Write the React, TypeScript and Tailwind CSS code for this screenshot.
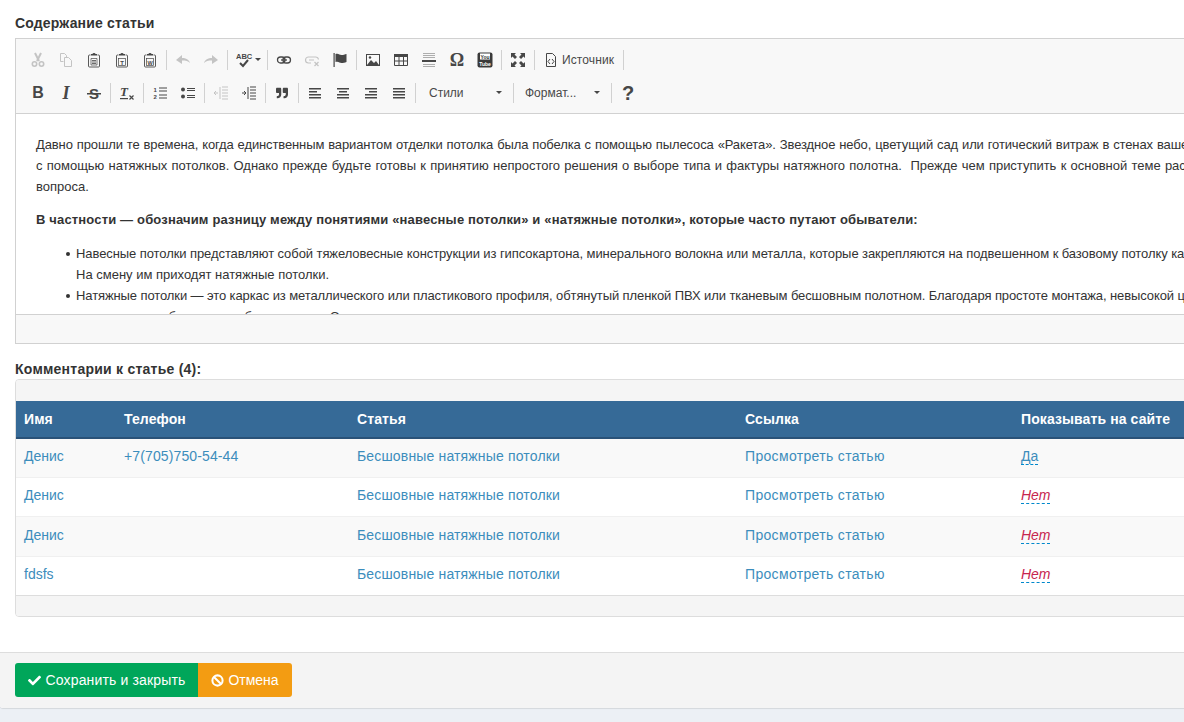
import { FaCheck, FaQuoteRight } from "react-icons/fa"

const Svg = ({ children, className = "" }: { children: React.ReactNode; className?: string }) => (
  <svg viewBox="0 0 16 16" width="16" height="16" className={className}>
    {children}
  </svg>
)

const Btn = ({ children, off }: { children: React.ReactNode; off?: boolean }) => (
  <div className={`w-[28px] h-[24px] flex items-center justify-center ${off ? "text-[#c4c4c4]" : "text-[#474747]"}`}>{children}</div>
)

const Sep = () => (
  <div className="w-[5px] h-[24px] flex justify-start pl-[2px]">
    <div className="w-px h-[20px] mt-[2px] bg-[#d1d1d1]" />
  </div>
)

const Clip = ({ children }: { children?: React.ReactNode }) => (
  <Svg>
    <path d="M4.500 3H3.500a1 1 0 00-1 1v10a1 1 0 001 1h9a1 1 0 001-1V4a1 1 0 00-1-1h-1" fill="none" stroke="currentColor" strokeWidth="0.900" />
    <path d="M5 3.500V2h1.500a1.500 1 0 013 0H11v1.500z" fill="currentColor" />
    {children}
  </Svg>
)

const Lines = ({ rows }: { rows: [number, number, number][] }) => (
  <Svg>
    {rows.map(([x, y, w], i) => (
      <rect key={i} x={x} y={y} width={w} height="1.500" fill="currentColor" />
    ))}
  </Svg>
)

const Combo = ({ label, pad }: { label: string; pad: string }) => (
  <div className={`w-[93px] h-[24px] flex items-center justify-between pr-[8px] text-[12px] text-[#484848] ${pad}`}>
    <span>{label}</span>
    <span className="w-0 h-0 border-x-[3px] border-x-transparent border-t-[3px] border-t-[#474747] mr-[1px]" />
  </div>
)

const Row = ({ children }: { children: React.ReactNode }) => <div className="h-[33px] flex items-center pl-[8px]">{children}</div>

const bullet = "relative whitespace-nowrap before:content-[''] before:absolute before:left-[-10px] before:top-[9px] before:w-[4px] before:h-[4px] before:rounded-full before:bg-[#333]"

const comments = [
  { name: "Денис", phone: "+7(705)750-54-44", show: true, h: "h-[39px]" },
  { name: "Денис", phone: "", show: false, h: "h-[39px]" },
  { name: "Денис", phone: "", show: false, h: "h-[40px]" },
  { name: "fdsfs", phone: "", show: false, h: "h-[39px]" },
]

export default function App() {
  return (
    <div className="w-[1184px] h-[722px] overflow-hidden bg-[#ecf0f5] font-['Liberation_Sans',Arial,sans-serif] text-[#333]">
      <div className="w-[1320px] h-[708px] bg-white rounded-b-[3px] shadow-[0_1px_1px_rgba(0,0,0,0.1)]">
        <div className="px-[15px] pt-[13px]">
          <label className="block h-[20px] leading-[20px] mb-[5px] text-[14px] font-bold tracking-[0.17px]">Содержание статьи</label>

          {/* editor */}
          <div className="border border-[#d1d1d1] h-[306px] flex flex-col">
            <div className="h-[75px] bg-[#f8f8f8] border-b border-[#d1d1d1] py-[4px]">
              <Row>
                <Btn off>
                  <Svg>
                    <path d="M5 1l4 8M11 1L7 9" stroke="currentColor" strokeWidth="2" fill="none" />
                    <circle cx="4.500" cy="12" r="2.200" stroke="currentColor" strokeWidth="1.600" fill="none" />
                    <circle cx="11.500" cy="12" r="2.200" stroke="currentColor" strokeWidth="1.600" fill="none" />
                  </Svg>
                </Btn>
                <Btn off>
                  <Svg>
                    <path d="M2.500 1.500h4l2 2v2M2.500 1.500v8h3M6.500 5.500h4l3 3v6h-7z" fill="none" stroke="currentColor" />
                  </Svg>
                </Btn>
                <Btn>
                  <Clip>
                    <path d="M5 6.500h6v6.500H5z" fill="none" stroke="currentColor" strokeWidth="0.700" />
                    <path d="M6 8.500h4M6 10h4M6 11.500h4" stroke="currentColor" strokeWidth="0.800" />
                  </Clip>
                </Btn>
                <Btn>
                  <Clip>
                    <rect x="4.500" y="6.500" width="7" height="7" fill="none" stroke="currentColor" strokeWidth="0.700" />
                    <text x="8" y="12.800" fontSize="6" fontWeight="700" textAnchor="middle" fill="currentColor">T</text>
                  </Clip>
                </Btn>
                <Btn>
                  <Clip>
                    <rect x="4.500" y="6.500" width="7" height="7" fill="none" stroke="currentColor" strokeWidth="0.700" />
                    <text x="8" y="12.500" fontSize="5.500" fontWeight="700" textAnchor="middle" fill="currentColor">W</text>
                  </Clip>
                </Btn>
                <Sep />
                <Btn off>
                  <Svg>
                    <path d="M1 8l6-5v3c4 0 7 1.500 8 5-2-2-4-2.500-8-2.500V12z" fill="currentColor" />
                  </Svg>
                </Btn>
                <Btn off>
                  <Svg>
                    <path d="M15 8L9 3v3c-4 0-7 1.500-8 5 2-2 4-2.500 8-2.500V12z" fill="currentColor" />
                  </Svg>
                </Btn>
                <Sep />
                <div className="w-[35px] h-[24px] flex items-center pl-[6px] text-[#474747]">
                  <svg viewBox="0 0 18 18" width="18" height="18">
                    <text x="0" y="8" fontSize="7.500" fontWeight="700" fill="currentColor">ABC</text>
                    <path d="M4 12l3 3 5-6" fill="none" stroke="currentColor" strokeWidth="2" />
                  </svg>
                  <span className="ml-[1px] w-0 h-0 border-x-[3px] border-x-transparent border-t-[3px] border-t-[#474747]" />
                </div>
                <Sep />
                <Btn>
                  <Svg>
                    <rect x="1.500" y="5" width="7.500" height="6" rx="3" fill="none" stroke="currentColor" strokeWidth="1.300" />
                    <rect x="7" y="5" width="7.500" height="6" rx="3" fill="none" stroke="currentColor" strokeWidth="1.300" />
                    <path d="M5 8h6" stroke="currentColor" strokeWidth="1.300" />
                  </Svg>
                </Btn>
                <Btn off>
                  <Svg>
                    <path d="M8 5H4.500a3 3 0 000 6H7M8 5h3.500a3 3 0 013 2.500M5 8h5" fill="none" stroke="currentColor" strokeWidth="1.200" />
                    <path d="M10.500 10l4 4M14.500 10l-4 4" stroke="currentColor" strokeWidth="1.200" />
                  </Svg>
                </Btn>
                <Btn>
                  <Svg>
                    <rect x="1.500" y="1" width="1.200" height="14" fill="currentColor" />
                    <path d="M3.500 2c3-1 4 1 6 1 2 0 3-.5 5-1v8c-2 .7-3 1-5 1s-3-2-6-1z" fill="currentColor" />
                  </Svg>
                </Btn>
                <Sep />
                <Btn>
                  <Svg>
                    <rect x="1.500" y="2.500" width="13" height="11" fill="none" stroke="currentColor" />
                    <path d="M2 13l4-5 3 3 2-2 3 4z" fill="currentColor" />
                    <circle cx="5" cy="5.500" r="1.200" fill="currentColor" />
                  </Svg>
                </Btn>
                <Btn>
                  <Svg>
                    <rect x="1" y="2" width="14" height="3" fill="currentColor" />
                    <path d="M1.500 2.500h13v11h-13zM1.500 9h13M6 5v8M10.500 5v8" fill="none" stroke="currentColor" />
                  </Svg>
                </Btn>
                <Btn>
                  <Svg>
                    <path d="M2 1.500h12M2 3.500h12M2 5.500h12M2 12.500h12M2 14.500h12" stroke="#9a9a9a" strokeWidth="0.800" />
                    <rect x="1" y="8" width="14" height="2" fill="currentColor" />
                  </Svg>
                </Btn>
                <Btn>
                  <span className="font-['Liberation_Serif',serif] text-[18px] font-bold leading-none">Ω</span>
                </Btn>
                <Btn>
                  <Svg>
                    <rect x="0.500" y="0.500" width="15" height="15" rx="2" fill="#3a3a3a" />
                    <rect x="3" y="1.500" width="10" height="6" fill="#fff" />
                    <text x="8" y="6.500" fontSize="5" fontWeight="700" textAnchor="middle" fill="#333">You</text>
                    <text x="8" y="13.500" fontSize="5" fontWeight="700" textAnchor="middle" fill="#fff">Tube</text>
                  </Svg>
                </Btn>
                <Sep />
                <Btn>
                  <Svg>
                    <path d="M1 1h5L4.500 2.500 7 5 5 7 2.500 4.500 1 6zM15 1v5l-1.500-1.500L11 7 9 5l2.500-2.500L10 1zM1 15v-5l1.500 1.500L5 9l2 2-2.500 2.500L6 15zM15 15h-5l1.500-1.500L9 11l2-2 2.500 2.500L15 10z" fill="currentColor" />
                  </Svg>
                </Btn>
                <Sep />
                <div className="w-[84px] h-[24px] flex items-center pl-[6px] text-[12px] tracking-[0.1px] text-[#484848]">
                  <Svg className="shrink-0">
                    <path d="M3.500 1.500h6l3 3v10h-9z" fill="none" stroke="#474747" />
                    <path d="M7 7L5 9.500 7 12M9 7l2 2.500L9 12" fill="none" stroke="#474747" />
                  </Svg>
                  <span className="ml-[3px]">Источник</span>
                </div>
                <Sep />
              </Row>
              <Row>
                <Btn>
                  <span className="text-[16px] font-bold leading-none">B</span>
                </Btn>
                <Btn>
                  <span className="font-['Liberation_Serif',serif] text-[18px] font-bold italic leading-none">I</span>
                </Btn>
                <Btn>
                  <Svg>
                    <text x="8" y="14" fontSize="15" fontWeight="700" textAnchor="middle" fill="currentColor">S</text>
                    <rect x="1" y="8" width="14" height="1.500" fill="currentColor" />
                  </Svg>
                </Btn>
                <Sep />
                <Btn>
                  <Svg>
                    <text x="1" y="11" fontSize="13" fontWeight="700" fontStyle="italic" fontFamily="Liberation Serif" fill="currentColor">T</text>
                    <rect x="1" y="13" width="8" height="1.200" fill="currentColor" />
                    <path d="M10.500 10.500l4 4M14.500 10.500l-4 4" stroke="currentColor" strokeWidth="1.200" />
                  </Svg>
                </Btn>
                <Sep />
                <Btn>
                  <Svg>
                    <path d="M7 3h8M7 6h8M7 10h8M7 13h8" stroke="currentColor" strokeWidth="1" />
                    <text x="1.500" y="6.500" fontSize="6" fontWeight="700" fill="currentColor">1</text>
                    <text x="1.500" y="14" fontSize="6" fontWeight="700" fill="currentColor">2</text>
                  </Svg>
                </Btn>
                <Btn>
                  <Svg>
                    <circle cx="3" cy="4.500" r="2" fill="currentColor" />
                    <circle cx="3" cy="11.500" r="2" fill="currentColor" />
                    <path d="M7 3.500h8M7 5.500h8M7 10.500h8M7 12.500h8" stroke="currentColor" strokeWidth="1" />
                  </Svg>
                </Btn>
                <Sep />
                <Btn off>
                  <Svg>
                    <path d="M9 2h6M9 5h6M9 8h6M9 11h6M9 14h6M7 2v12" stroke="currentColor" />
                    <path d="M5 8H1M3 6L1 8l2 2" fill="none" stroke="currentColor" />
                  </Svg>
                </Btn>
                <Btn>
                  <Svg>
                    <path d="M9 2h6M9 5h6M9 8h6M9 11h6M9 14h6M7 2v12" stroke="currentColor" />
                    <path d="M1 8h4M3 6l2 2-2 2" fill="none" stroke="currentColor" />
                  </Svg>
                </Btn>
                <Sep />
                <Btn>
                  <FaQuoteRight size={12} />
                </Btn>
                <Sep />
                <Btn>
                  <Lines rows={[[2, 3, 12], [2, 6, 8], [2, 9, 12], [2, 12, 12]]} />
                </Btn>
                <Btn>
                  <Lines rows={[[2, 3, 12], [4, 6, 8], [2, 9, 12], [2, 12, 12]]} />
                </Btn>
                <Btn>
                  <Lines rows={[[2, 3, 12], [6, 6, 8], [2, 9, 12], [2, 12, 12]]} />
                </Btn>
                <Btn>
                  <Lines rows={[[2, 3, 12], [2, 6, 12], [2, 9, 12], [2, 12, 12]]} />
                </Btn>
                <Sep />
                <Combo label="Стили" pad="pl-[11px]" />
                <Sep />
                <Combo label="Формат..." pad="pl-[9px]" />
                <Sep />
                <Btn>
                  <span className="text-[20px] font-bold leading-none">?</span>
                </Btn>
              </Row>
            </div>

            <div className="h-[200px] overflow-hidden bg-white pl-[20px] pt-[20px] text-[13px] leading-[21px]">
              <div className="h-[21px] whitespace-nowrap tracking-[-0.12px] [word-spacing:0.5px]">
                Давно прошли те времена, когда единственным вариантом отделки потолка была побелка с помощью пылесоса «Ракета». Звездное небо, цветущий сад или готический витраж в стенах вашего дома
              </div>
              <div className="h-[21px] whitespace-nowrap tracking-[-0.02px] [word-spacing:0.7px]">
                с помощью натяжных потолков. Однако прежде будьте готовы к принятию непростого решения о выборе типа и фактуры натяжного полотна. &nbsp;Прежде чем приступить к основной теме рассмотрения
              </div>
              <div className="h-[21px]">вопроса.</div>
              <p className="mt-[12px] h-[21px] font-bold whitespace-nowrap tracking-[0.16px]">
                В частности — обозначим разницу между понятиями «навесные потолки» и «натяжные потолки», которые часто путают обыватели:
              </p>
              <ul className="mt-[13px] ml-[40px] w-[1270px]">
                <li className={`${bullet} tracking-[-0.08px]`}>
                  Навесные потолки представляют собой тяжеловесные конструкции из гипсокартона, минерального волокна или металла, которые закрепляются на подвешенном к базовому потолку каркасе.
                </li>
                <li className="whitespace-nowrap">На смену им приходят натяжные потолки.</li>
                <li className={`${bullet} tracking-[-0.1px]`}>
                  Натяжные потолки — это каркас из металлического или пластикового профиля, обтянутый пленкой ПВХ или тканевым бесшовным полотном. Благодаря простоте монтажа, невысокой цене
                </li>
                <li className="whitespace-nowrap">материал стал быстро и в обиход вошел. Однако</li>
              </ul>
            </div>

            <div className="flex-1 bg-[#f8f8f8] border-t border-[#d1d1d1]" />
          </div>

          <label className="block mt-[15px] h-[20px] leading-[20px] text-[14px] font-bold tracking-[0.24px]">Комментарии к статье (4):</label>

          {/* comments grid */}
          <div className="border border-[#ddd] rounded-[4px] overflow-hidden h-[238px] flex flex-col">
            <div className="h-[21px] bg-[#f5f5f5]" />
            <table className="table-fixed w-full text-[14px] border-collapse">
              <colgroup>
                <col className="w-[100px]" />
                <col className="w-[233px]" />
                <col className="w-[388px]" />
                <col className="w-[276px]" />
                <col />
              </colgroup>
              <thead>
                <tr className="h-[37px] bg-[#366a97] text-white border-b-2 border-[#2a5278]">
                  {["Имя", "Телефон", "Статья", "Ссылка", "Показывать на сайте"].map((t) => (
                    <th key={t} className="px-[8px] text-left font-bold tracking-[0.1px]">{t}</th>
                  ))}
                </tr>
              </thead>
              <tbody>
                {comments.map((c, i) => (
                  <tr key={i} className={`${c.h} border-t border-[#f0f0f0] text-[#3c8dbc] ${i % 2 === 0 ? "bg-[#f9f9f9]" : "bg-white"}`}>
                    <td className="px-[8px] pb-[2px]">{c.name}</td>
                    <td className="px-[8px] pb-[2px] tracking-[0.12px]">{c.phone}</td>
                    <td className="px-[8px] pb-[2px] tracking-[0.16px]">Бесшовные натяжные потолки</td>
                    <td className="px-[8px] pb-[2px] tracking-[0.33px]">Просмотреть статью</td>
                    <td className="px-[8px] pb-[2px]">
                      {c.show ? (
                        <span className="border-b border-dashed border-[#08c]">Да</span>
                      ) : (
                        <span className="border-b border-dashed border-[#08c] text-[#c7254e] italic">Нет</span>
                      )}
                    </td>
                  </tr>
                ))}
              </tbody>
            </table>
            <div className="flex-1 bg-[#f5f5f5] border-t border-[#ddd]" />
          </div>
        </div>

        {/* footer */}
        <div className="mt-[35px] h-[56px] bg-[#f4f4f4] border-t border-[#ddd] px-[15px] pt-[10px] rounded-b-[3px] flex items-start">
          <button className="h-[34px] w-[183px] flex items-center justify-center gap-[5px] bg-[#00a65a] rounded-l-[3px] text-white text-[14px] tracking-[0.15px]">
            <FaCheck size={13} />
            Сохранить и закрыть
          </button>
          <button className="h-[34px] w-[94px] flex items-center justify-center gap-[4px] bg-[#f39c12] rounded-r-[3px] text-white text-[14px]">
            <svg viewBox="0 0 14 14" width="13" height="13">
              <circle cx="7" cy="7" r="5.500" fill="none" stroke="currentColor" strokeWidth="2.200" />
              <path d="M3.200 3.200l7.600 7.600" stroke="currentColor" strokeWidth="2.200" />
            </svg>
            Отмена
          </button>
        </div>
      </div>
    </div>
  )
}
